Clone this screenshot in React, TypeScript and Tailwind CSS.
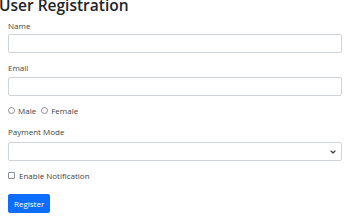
import { ChevronDown } from "lucide-react";

const font = { fontFamily: '"Open Sans", "Noto Sans", sans-serif' };

const Field = ({ label, className, gap }: { label: string; className?: string; gap: string }) => (
  <div className={className}>
    <label className={`block text-[8px] leading-[11px] text-[#444] ${gap}`}>{label}</label>
    <input className="block w-full h-[19px] rounded-[2px] border border-[#ced4da] bg-white" />
  </div>
);

export default function App() {
  return (
    <div className="w-[350px] h-[223px] overflow-hidden bg-white text-[#444]" style={font}>
      <h1 className="text-[15.5px] leading-[18px] font-semibold text-[#212529] mt-[-4px] ml-[-1px]">
        User Registration
      </h1>
      <form className="px-2">
        <Field label="Name" className="mt-[6px]" gap="mb-[3px]" />
        <Field label="Email" className="mt-[9px]" gap="mb-[4px]" />

        {/* Gender */}
        <div className="flex items-center gap-[5px] mt-[9px] text-[8px] leading-[11px]">
          <label className="flex items-center gap-[3px]">
            <span className="inline-block w-[7px] h-[7px] rounded-full border border-[#8a8f94]" />
            Male
          </label>
          <label className="flex items-center gap-[3px]">
            <span className="inline-block w-[7px] h-[7px] rounded-full border border-[#8a8f94]" />
            Female
          </label>
        </div>

        {/* Payment */}
        <div className="mt-[10px]">
          <label className="block text-[8px] leading-[11px] mb-[5px]">Payment Mode</label>
          <div className="flex items-center justify-end h-[19px] rounded-[2px] border border-[#ced4da] bg-white pr-[4px]">
            <ChevronDown className="w-[8px] h-[8px] text-[#343a40]" strokeWidth={3.5} />
          </div>
        </div>

        <label className="flex items-center gap-[4px] mt-[9px] text-[8px] leading-[11px]">
          <span className="inline-block w-[7px] h-[7px] rounded-[1px] border border-[#8a8f94]" />
          Enable Notification
        </label>

        <button
          type="button"
          className="mt-[13px] h-[19px] px-[6px] rounded-[2px] bg-[#0d6efd] text-white text-[8px] leading-[11px]"
        >
          Register
        </button>
      </form>
    </div>
  );
}
